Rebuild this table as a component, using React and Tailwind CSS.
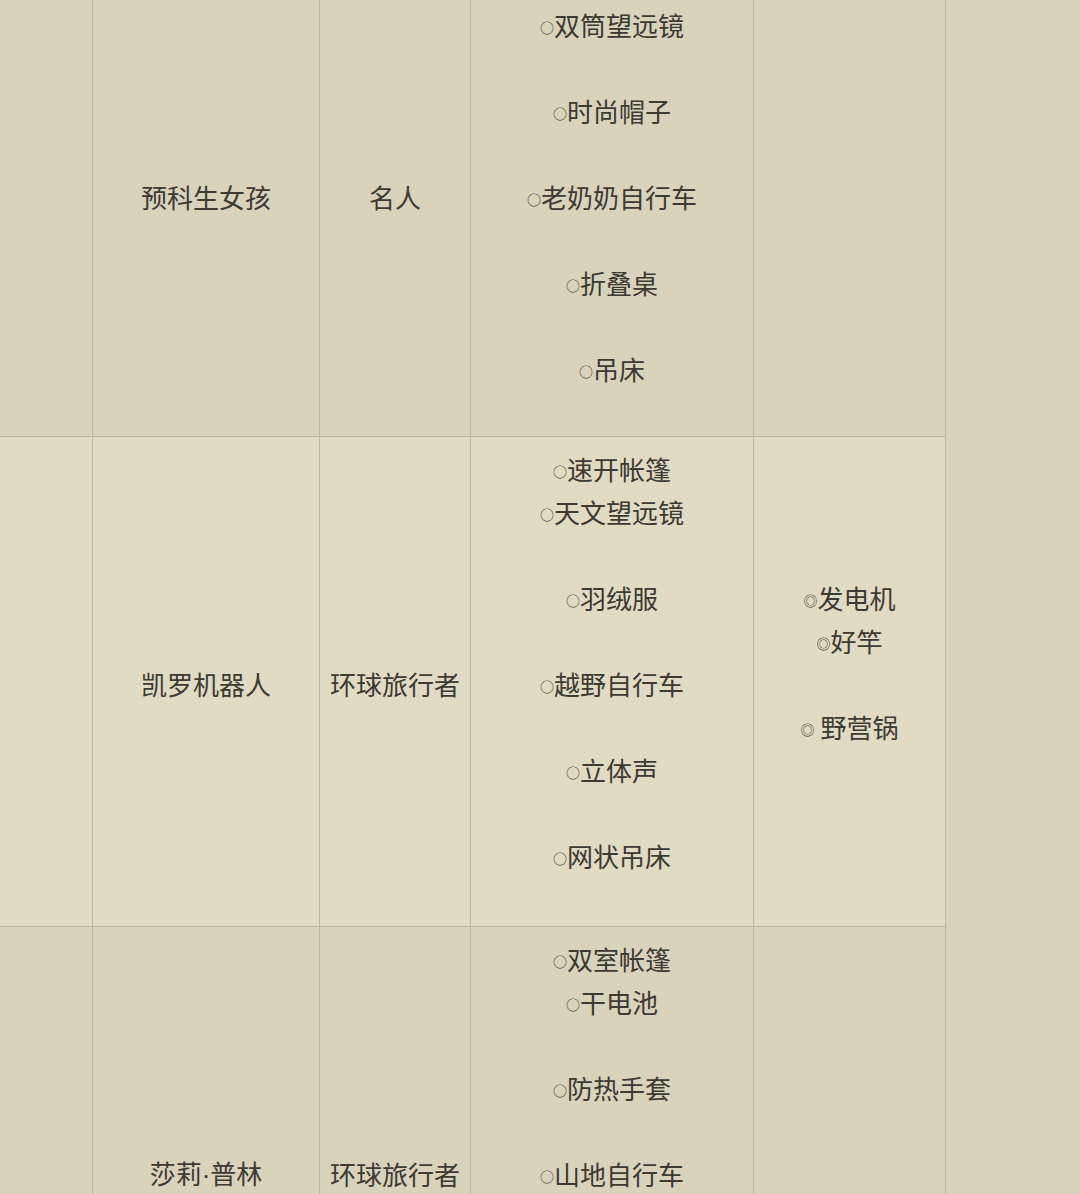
import React from "react";

const ROWS = [
  {
    bg: "bg-[#d8d3bb]",
    h: "h-[484px]",
    name: "预科生女孩",
    role: "名人",
    items: ["○双筒望远镜", "", "○时尚帽子", "", "○老奶奶自行车", "", "○折叠桌", "", "○吊床"],
    extras: [],
  },
  {
    bg: "bg-[#e0dbc3]",
    h: "h-[490px]",
    name: "凯罗机器人",
    role: "环球旅行者",
    items: ["○速开帐篷", "○天文望远镜", "", "○羽绒服", "", "○越野自行车", "", "○立体声", "", "○网状吊床", ""],
    extras: ["◎发电机", "◎好竿", "", "◎ 野营锅", ""],
  },
  {
    bg: "bg-[#d8d3bb]",
    h: "h-[490px]",
    name: (
      <>
        莎莉<span style={{ fontFamily: '"Liberation Sans", sans-serif' }}>·</span>普林
      </>
    ),
    role: "环球旅行者",
    items: ["○双室帐篷", "○干电池", "", "○防热手套", "", "○山地自行车", "", "○登山鞋", "", "○野餐垫", ""],
    extras: [],
  },
];

const Line = ({ text }) => {
  if (!text) return <div className="h-[43px]" />;
  const mark = text[0];
  const rest = text.slice(1);
  return (
    <div className="h-[43px] leading-[43px] whitespace-nowrap">
      <span className="text-[14px] align-[3px]">{mark}</span>
      {rest}
    </div>
  );
};

const Cell = ({ children }) => (
  <div className="flex flex-col items-center justify-center pt-1 border-r border-[#bdb6a0]">
    {children}
  </div>
);

export default function App() {
  return (
    <div
      className="w-[1080px] h-[1194px] overflow-hidden bg-[#d9d3bb] text-[26px] text-[#3b3a33]"
      style={{ fontFamily: '"Noto Sans CJK SC", "Noto Sans", sans-serif' }}
    >
      <div className="w-[946px] -mt-[47px] bg-[#d8d3bb]">
        {ROWS.map((row, i) => (
          <div
            key={i}
            className={`grid grid-cols-[93px_227px_151px_283px_192px] border-b border-[#bdb6a0] ${row.bg} ${row.h}`}
          >
            <Cell />
            <Cell>
              <div className="leading-[43px] whitespace-nowrap">{row.name}</div>
            </Cell>
            <Cell>
              <div className="leading-[43px] whitespace-nowrap">{row.role}</div>
            </Cell>
            <Cell>
              {row.items.map((t, j) => (
                <Line key={j} text={t} />
              ))}
            </Cell>
            <Cell>
              {row.extras.map((t, j) => (
                <Line key={j} text={t} />
              ))}
            </Cell>
          </div>
        ))}
      </div>
    </div>
  );
}
